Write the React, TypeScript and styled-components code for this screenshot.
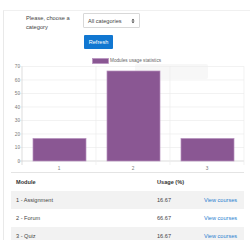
import React from "react";
import styled, { createGlobalStyle } from "styled-components";

const Global = createGlobalStyle`
  html, body { margin: 0; padding: 0; background: #fff; }
  body { font-family: "Liberation Sans", Arial, sans-serif; color: #373a3c; }
  * { box-sizing: border-box; }
`;

const Frame = styled.div`
  margin: 10px 0 0 3px;
  height: 230px;
  border-left: 1px solid #e9e9e9;
  border-top: 1px solid #f0f0f0;
  display: flex;
  flex-direction: column;
  & > * { flex-shrink: 0; }
`;

const FormRow = styled.div`
  display: flex;
  padding: 2px 0 0 22px;
`;

const Label = styled.div`
  width: 57px;
  font-size: 5.7px;
  line-height: 8.6px;
  padding-top: 1px;
  color: #444;
`;

const Controls = styled.div`
  display: flex;
  flex-direction: column;
  align-items: flex-start;
  gap: 7px;
`;

const Select = styled.div`
  width: 57px;
  height: 15px;
  border: 1px solid #d8d8d8;
  border-radius: 1px;
  display: flex;
  align-items: center;
  justify-content: space-between;
  padding: 0 4px 0 4px;
  font-size: 5.6px;
  color: #444;
`;

const Arrow = styled.svg`
  width: 4px;
  height: 6px;
`;

const Button = styled.div`
  margin-left: 1px;
  width: 29px;
  height: 14px;
  background: #1177d1;
  color: #fff;
  font-size: 5.6px;
  display: flex;
  align-items: center;
  justify-content: center;
  border-radius: 1px;
`;

const ChartSvg = styled.svg`
  display: block;
  margin-top: 3px;
  width: 246px;
  height: 120px;
`;

const Table = styled.table`
  margin-left: 7px;
  width: 233px;
  border-collapse: collapse;
  font-size: 5.6px;
  color: #444;
`;

const Th = styled.th<{ $w: number }>`
  width: ${(p) => p.$w}px;
  text-align: left;
  font-weight: bold;
  height: 18px;
  padding: 0 5px;
  border-top: 1px solid #e4e4e4;
  color: #333;
`;

const Tr = styled.tr<{ $striped: boolean }>`
  background: ${(p) => (p.$striped ? "#f2f2f2" : "transparent")};
`;

const Td = styled.td`
  height: 18px;
  padding: 0 5px;
`;

const Link = styled.span`
  color: #2a7fd0;
`;

const rows = [
  { name: "1 - Assignment", usage: "16.67", v: 16.67 },
  { name: "2 - Forum", usage: "66.67", v: 66.67 },
  { name: "3 - Quiz", usage: "16.67", v: 16.67 },
];

const Chart = () => {
  const base = 161;
  const k = 1.35;
  const ticks = [0, 10, 20, 30, 40, 50, 60, 70];
  const cats = [22, 96, 170, 244];
  return (
    <ChartSvg viewBox="0 0 246 120">
      <g transform="translate(-4,-52)">
        <rect x="135" y="64" width="73" height="15" rx="2" fill="#f7f7f7" />
        <rect x="138" y="72" width="4" height="4" fill="#efefef" />
        <rect x="92.5" y="58.5" width="16" height="5" fill="#8a5793" stroke="#b995c0" strokeWidth="0.8" />
        <text x="110" y="62.3" fontSize="4.7" fill="#666" fontFamily="Liberation Sans, Arial, sans-serif">
          Modules usage statistics
        </text>
        {ticks.map((t) => {
          const y = base - t * k;
          return (
            <g key={t}>
              <line x1="18" x2="244" y1={y} y2={y} stroke={t === 0 ? "#cfcfcf" : "#ececec"} strokeWidth="0.7" />
              <text x="20" y={y + 1.6} fontSize="4.7" fill="#777" textAnchor="end" fontFamily="Liberation Sans, Arial, sans-serif">
                {t}
              </text>
            </g>
          );
        })}
        {cats.map((x, i) => (
          <line key={x} x1={x} x2={x} y1={base - 70 * k} y2={base + 4} stroke={i === 0 ? "#cfcfcf" : "#ececec"} strokeWidth="0.7" />
        ))}
        {rows.map((r, i) => {
          const x0 = cats[i] + 11;
          const h = r.v * k;
          return (
            <g key={r.name}>
              <rect x={x0} y={base - h} width="53" height={h} fill="#8a5793" stroke="#b68fbd" strokeWidth="0.7" />
              <text x={cats[i] + 37} y="169.5" fontSize="4.7" fill="#777" textAnchor="middle" fontFamily="Liberation Sans, Arial, sans-serif">
                {i + 1}
              </text>
            </g>
          );
        })}
      </g>
    </ChartSvg>
  );
};

export default function App() {
  return (
    <>
      <Global />
      <Frame>
        <FormRow>
          <Label>Please, choose a category</Label>
          <Controls>
            <Select>
              <span>All categories</span>
              <Arrow viewBox="0 0 4 6">
                <path d="M0.5 2.4 L2 0.8 L3.5 2.4 Z M0.5 3.6 L2 5.2 L3.5 3.6 Z" fill="#333" />
              </Arrow>
            </Select>
            <Button>Refresh</Button>
          </Controls>
        </FormRow>
        <Chart />
        <Table>
          <thead>
            <tr>
              <Th $w={141}>Module</Th>
              <Th $w={47}>Usage (%)</Th>
              <Th $w={45}></Th>
            </tr>
          </thead>
          <tbody>
            {rows.map((r, i) => (
              <Tr key={r.name} $striped={i % 2 === 0}>
                <Td>{r.name}</Td>
                <Td>{r.usage}</Td>
                <Td>
                  <Link>View courses</Link>
                </Td>
              </Tr>
            ))}
          </tbody>
        </Table>
      </Frame>
    </>
  );
}
